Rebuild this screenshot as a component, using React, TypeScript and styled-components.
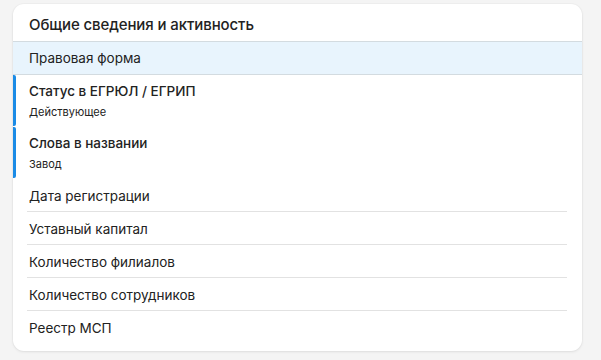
import React from 'react';
import styled, { createGlobalStyle } from 'styled-components';

const GlobalStyle = createGlobalStyle`
  html, body {
    margin: 0;
    padding: 0;
    background: #f4f4f4;
    font-family: Inter, Roboto, "Noto Sans", sans-serif;
    color: #222;
  }
`;

const Page = styled.div`
  width: 601px;
  height: 360px;
  padding: 4px 0 0 13px;
  box-sizing: border-box;
`;

const Card = styled.section`
  width: 569px;
  height: 347px;
  background: #fff;
  border-radius: 11px;
  box-shadow: 0 1px 3px rgba(0, 0, 0, 0.08), 0 0 0 1px rgba(0, 0, 0, 0.02);
  overflow: hidden;
  display: flex;
  flex-direction: column;
`;

const Header = styled.h2`
  margin: 0;
  height: 38px;
  box-sizing: border-box;
  padding: 4px 16px 0;
  display: flex;
  align-items: center;
  font-size: 15px;
  font-weight: 500;
  letter-spacing: -0.1px;
  border-bottom: 1px solid #d3dbe0;
`;

const Row = styled.div<{ active?: boolean; divided?: boolean }>`
  position: relative;
  height: 33px;
  box-sizing: border-box;
  padding: 0 16px;
  display: flex;
  align-items: center;
  background: ${({ active }) => (active ? '#e8f4fd' : 'transparent')};
  border-bottom: ${({ active }) => (active ? '1px solid #d3dbe0' : 'none')};

  &::after {
    content: '';
    display: ${({ divided }) => (divided ? 'block' : 'none')};
    position: absolute;
    left: 14px;
    right: 15px;
    bottom: 0;
    height: 1px;
    background: #e2e2e2;
  }
`;

const MarkedRow = styled.div`
  position: relative;
  height: 52px;
  box-sizing: border-box;
  padding: 7px 16px 8px;
  display: flex;
  flex-direction: column;

  &::before {
    content: '';
    position: absolute;
    left: 0;
    top: 0;
    bottom: 1px;
    width: 3px;
    border-radius: 0 2px 2px 0;
    background: #1a8be6;
  }
`;

const Label = styled.span`
  font-size: 13.5px;
  line-height: 18px;
`;

const Title = styled.span`
  font-size: 13.5px;
  font-weight: 500;
  line-height: 18px;
`;

const Sub = styled.span`
  margin-top: 5px;
  font-size: 11px;
  line-height: 14px;
`;

const items = [
  'Дата регистрации',
  'Уставный капитал',
  'Количество филиалов',
  'Количество сотрудников',
  'Реестр МСП',
];

const App: React.FC = () => {
  return (
    <>
      <GlobalStyle />
      <Page>
        <Card>
          <Header>Общие сведения и активность</Header>
          <Row active>
            <Label>Правовая форма</Label>
          </Row>
          <MarkedRow>
            <Title>Статус в ЕГРЮЛ / ЕГРИП</Title>
            <Sub>Действующее</Sub>
          </MarkedRow>
          <MarkedRow>
            <Title>Слова в названии</Title>
            <Sub>Завод</Sub>
          </MarkedRow>
          {items.map((item, i) => (
            <Row key={item} divided={i < items.length - 1}>
              <Label>{item}</Label>
            </Row>
          ))}
        </Card>
      </Page>
    </>
  );
};

export default App;
